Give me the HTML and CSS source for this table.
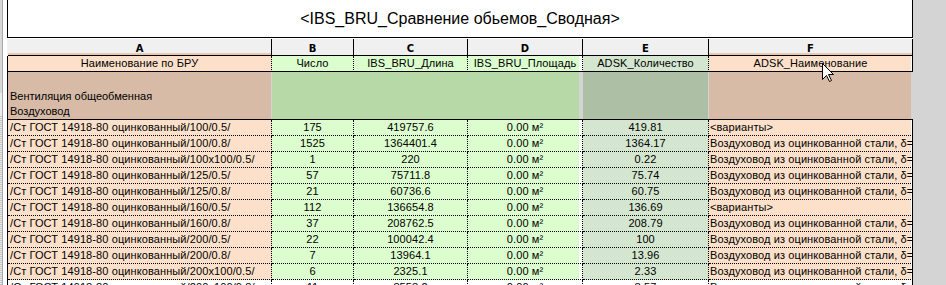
FILE: index.html
```html
<!DOCTYPE html>
<html lang="ru">
<head>
<meta charset="utf-8">
<title>IBS_BRU_Сравнение обьемов_Сводная</title>
<link rel="stylesheet" href="styles.css">
</head>
<body>
<div class="screen">
  <div class="edge"></div>
  <div class="sheet">
    <div class="title">&lt;IBS_BRU_Сравнение обьемов_Сводная&gt;</div>

    <div class="row letters">
      <div class="hl-warm">A</div><div>B</div><div>C</div><div>D</div><div>E</div><div class="hl-warm">F</div>
    </div>

    <div class="row head">
      <div class="ca">Наименование по БРУ</div>
      <div class="cg">Число</div>
      <div class="cg">IBS_BRU_Длина</div>
      <div class="cd">IBS_BRU_Площадь</div>
      <div class="ce">ADSK_Количество</div>
      <div class="cf">ADSK_Наименование</div>
    </div>

    <div class="group">
      <div class="g-a">
        <div>Вентиляция общеобменная</div>
        <div>Воздуховод</div>
      </div>
      <div class="g-bcd"></div>
      <div class="g-e"></div>
      <div class="g-f"></div>
    </div>

    <div class="row data first">
      <div class="ca">/Ст ГОСТ 14918-80 оцинкованный/100/0.5/</div><div class="cg">175</div><div class="cg">419757.6</div><div class="cd">0.00 м²</div><div class="ce">419.81</div><div class="cf">&lt;варианты&gt;</div>
    </div>
    <div class="row data">
      <div class="ca">/Ст ГОСТ 14918-80 оцинкованный/100/0.8/</div><div class="cg">1525</div><div class="cg">1364401.4</div><div class="cd">0.00 м²</div><div class="ce">1364.17</div><div class="cf">Воздуховод из оцинкованной стали, δ=</div>
    </div>
    <div class="row data">
      <div class="ca">/Ст ГОСТ 14918-80 оцинкованный/100x100/0.5/</div><div class="cg">1</div><div class="cg">220</div><div class="cd">0.00 м²</div><div class="ce">0.22</div><div class="cf">Воздуховод из оцинкованной стали, δ=</div>
    </div>
    <div class="row data">
      <div class="ca">/Ст ГОСТ 14918-80 оцинкованный/125/0.5/</div><div class="cg">57</div><div class="cg">75711.8</div><div class="cd">0.00 м²</div><div class="ce">75.74</div><div class="cf">Воздуховод из оцинкованной стали, δ=</div>
    </div>
    <div class="row data">
      <div class="ca">/Ст ГОСТ 14918-80 оцинкованный/125/0.8/</div><div class="cg">21</div><div class="cg">60736.6</div><div class="cd">0.00 м²</div><div class="ce">60.75</div><div class="cf">Воздуховод из оцинкованной стали, δ=</div>
    </div>
    <div class="row data">
      <div class="ca">/Ст ГОСТ 14918-80 оцинкованный/160/0.5/</div><div class="cg">112</div><div class="cg">136654.8</div><div class="cd">0.00 м²</div><div class="ce">136.69</div><div class="cf">&lt;варианты&gt;</div>
    </div>
    <div class="row data">
      <div class="ca">/Ст ГОСТ 14918-80 оцинкованный/160/0.8/</div><div class="cg">37</div><div class="cg">208762.5</div><div class="cd">0.00 м²</div><div class="ce">208.79</div><div class="cf">Воздуховод из оцинкованной стали, δ=</div>
    </div>
    <div class="row data">
      <div class="ca">/Ст ГОСТ 14918-80 оцинкованный/200/0.5/</div><div class="cg">22</div><div class="cg">100042.4</div><div class="cd">0.00 м²</div><div class="ce">100</div><div class="cf">Воздуховод из оцинкованной стали, δ=</div>
    </div>
    <div class="row data">
      <div class="ca">/Ст ГОСТ 14918-80 оцинкованный/200/0.8/</div><div class="cg">7</div><div class="cg">13964.1</div><div class="cd">0.00 м²</div><div class="ce">13.96</div><div class="cf">Воздуховод из оцинкованной стали, δ=</div>
    </div>
    <div class="row data">
      <div class="ca">/Ст ГОСТ 14918-80 оцинкованный/200x100/0.5/</div><div class="cg">6</div><div class="cg">2325.1</div><div class="cd">0.00 м²</div><div class="ce">2.33</div><div class="cf">Воздуховод из оцинкованной стали, δ=</div>
    </div>
    <div class="row data plain">
      <div class="ca">/Ст ГОСТ 14918-80 оцинкованный/200x100/0.8/</div><div>11</div><div>8558.2</div><div>0.00 м²</div><div>8.57</div><div class="cf">Воздуховод из оцинкованной стали, δ=</div>
    </div>
  </div>
  <div class="fill"></div>

  <svg class="cursor" width="13" height="20" viewBox="0 0 13 20" aria-hidden="true">
    <path d="M0.5 0.5 L0.5 16.5 L4.5 12.5 L7.5 18.5 L9.5 17.5 L6.5 11.5 L11.5 11.5 Z" fill="#fff" stroke="#000" stroke-width="1" stroke-linejoin="miter"/>
  </svg>
</div>
</body>
</html>
```

FILE: styles.css
```css
:root {
  --peach: #fce0ca;
  --green: #dcfdce;
  --egreen: #d4e6cf;
  --tan: #d7bba6;
  --ggreen: #b7d9a7;
  --gegreen: #adc0a6;
  --bg-gray: #d4d4d4;
}

* { box-sizing: border-box; }

html, body {
  margin: 0;
  padding: 0;
  background: #fff;
}

body {
  font-family: "Liberation Sans", Arial, sans-serif;
  font-size: 11px;
  color: #000;
}

.screen {
  position: relative;
  display: flex;
  height: 285px;
  overflow: hidden;
  background: #fff;
}

.edge {
  flex: none;
  width: 3px;
  margin-right: 4px;
  border-right: 1px solid #a9a9a9;
  background: linear-gradient(#d8d8d8 0 93px, #ededed 93px 115px, transparent 115px),
              repeating-linear-gradient(#c4c4c4 0 1px, #ededed 1px 2px);
}

.sheet {
  flex: none;
  width: 906px;
}

.fill {
  flex: 1;
  background: var(--bg-gray);
}

.title {
  height: 38px;
  border-left: 1px solid #000;
  border-right: 1px solid #000;
  border-bottom: 1px solid #000;
  text-align: center;
  font-size: 16px;
  line-height: 37px;
  white-space: nowrap;
}

.row {
  display: grid;
  grid-template-columns: 264px 82px 114px 115px 126px 204px;
  border-left: 1px solid #000;
}

.row > div {
  border-right: 1px dotted #000;
  border-bottom: 1px dotted #000;
  height: 16px;
  line-height: 15px;
  text-align: center;
  white-space: nowrap;
  overflow: hidden;
  letter-spacing: 0.1px;
}

.row > div:last-child {
  border-right: 1px solid #000;
}

/* column letter row */
.letters {
  margin-top: 1px;
  border-left-color: #f0f0f0;
}

.letters > div {
  height: 17px;
  line-height: 17px;
  background: #f0f0f0;
  border-right: 1px solid #000;
  border-bottom: 1px solid #000;
  font-family: "DejaVu Sans", "Liberation Sans", sans-serif;
  font-weight: bold;
  font-size: 10px;
  padding-top: 1px;
  letter-spacing: 0;
}

.letters > .hl-warm {
  box-shadow: inset 0 -2px 0 #e9c9b1;
}

/* header row */
.head > div {
  border-bottom: 1px solid #000;
}

.ca {
  background: var(--peach);
}

.row > .ca {
  text-align: left;
  padding-left: 2px;
}

.head > .ca {
  text-align: center;
  padding-left: 0;
}

.cg {
  background: var(--green);
}

.cd {
  background: linear-gradient(90deg, var(--green) 111px, #fff 111px);
}

.ce {
  background: var(--egreen);
}

.cf {
  background: linear-gradient(90deg, var(--peach) 202px, #fff 202px);
}

.row > .cf {
  text-align: left;
  padding-left: 1px;
}

.head > .cf {
  text-align: center;
  padding-left: 0;
}

/* group row */
.group {
  display: flex;
  height: 48px;
  border-left: 1px solid #000;
  border-bottom: 1px solid #000;
  background: var(--bg-gray);
}

.g-a {
  width: 263px;
  margin-right: 1px;
  background: var(--tan);
  display: flex;
  flex-direction: column;
  justify-content: flex-end;
  padding-left: 2px;
  line-height: 15px;
  white-space: nowrap;
}

.g-bcd {
  width: 307px;
  margin-right: 4px;
  background: var(--ggreen);
}

.g-e {
  width: 125px;
  margin-right: 1px;
  background: var(--gegreen);
}

.g-f {
  width: 202px;
  background: var(--tan);
}

/* last, unhighlighted row */
.plain > div,
.plain > .ca,
.plain > .cf {
  background: #fff;
}

.cursor {
  position: absolute;
  left: 822px;
  top: 63px;
}
```
